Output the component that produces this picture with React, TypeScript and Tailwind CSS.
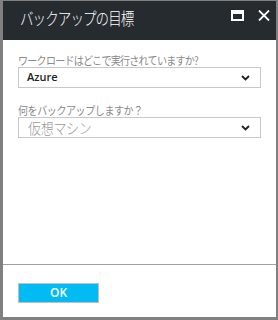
import React from "react";

const jp = "font-['Noto_Sans_CJK_JP','Noto_Sans',sans-serif]";

const Chevron: React.FC = () => (
  <svg width="9" height="6" viewBox="0 0 9 6" className="shrink-0">
    <path d="M1 1 L4.5 4.5 L8 1" fill="none" stroke="#1f1f1f" strokeWidth="1.8" />
  </svg>
);

export default function App() {
  return (
    <div className={`w-[278px] h-[320px] flex flex-col bg-white border-[#808080] border-t border-l-[3px] border-r-[2px] border-b-[3px] ${jp}`}>
      {/* title bar */}
      <div className="h-[39px] shrink-0 bg-[#262b2f] flex items-start pl-[17px] pr-[6px] pt-[3px]">
        <div className="flex-1 text-white text-[13.5px] font-light leading-[20px] tracking-[-0.9px] scale-y-[1.25] origin-top mt-[1px]">
          バックアップの目標
        </div>
        <div className="flex items-center gap-[14px] pt-[6px]">
          <svg width="13" height="11" viewBox="0 0 13 11">
            <rect x="1" y="1" width="11" height="9" fill="none" stroke="white" strokeWidth="2" />
            <rect x="1" y="1" width="11" height="3" fill="white" />
          </svg>
          <svg width="12" height="11" viewBox="0 0 12 11">
            <path d="M1 0.5 L11 10.5 M11 0.5 L1 10.5" stroke="white" strokeWidth="1.8" />
          </svg>
        </div>
      </div>

      {/* body */}
      <div className="flex-1 px-[15px] pt-[13px]">
        <div className="text-[#8a8a8a] text-[10px] leading-[12px] tracking-[-0.7px] scale-y-[1.15] origin-top">
          ワークロードはどこで実行されていますか?
        </div>
        <div className="mt-[2px] h-[21px] border border-[#c8c8c8] flex items-center justify-between pl-[8px] pr-[10px]">
          <span className="font-['Open_Sans',sans-serif] text-[11px] font-semibold text-[#222]">Azure</span>
          <Chevron />
        </div>
        <div className="mt-[15px] text-[#8a8a8a] text-[10px] leading-[12px] tracking-[-0.4px] scale-y-[1.15] origin-top">
          何をバックアップしますか？
        </div>
        <div className="mt-[2px] h-[21px] border border-[#c8c8c8] flex items-center justify-between pl-[9px] pr-[10px]">
          <span className="text-[13px] leading-[16px] text-[#9a9a9a] tracking-[-0.3px] font-light scale-y-[1.15]">仮想マシン</span>
          <Chevron />
        </div>
      </div>

      {/* footer */}
      <div className="h-[53px] shrink-0 border-t border-[#a0a0a0] pl-[15px] pt-[18px]">
        <button className="w-[81px] h-[20px] bg-[#00bcf2] border border-[#c8bcbc] text-white text-[12px] font-semibold font-['Open_Sans',sans-serif] flex items-center justify-center">
          OK
        </button>
      </div>
    </div>
  );
}
